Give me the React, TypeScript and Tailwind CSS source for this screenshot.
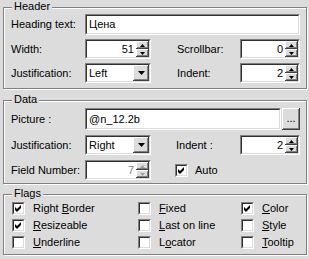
import React from "react";

const BG = "bg-[#dcdcdc]";

function Sunken({ className = "", children }: { className?: string; children?: React.ReactNode }) {
  return (
    <div className={`border border-t-[#808080] border-l-[#808080] border-b-white border-r-white ${className}`}>
      <div className="h-full w-full border border-t-[#303030] border-l-[#303030] border-b-[#dcdcdc] border-r-[#dcdcdc] bg-white flex items-center overflow-hidden">
        {children}
      </div>
    </div>
  );
}

const raised =
  "bg-[#dcdcdc] shadow-[inset_-1px_-1px_#404040,inset_1px_1px_#ffffff,inset_-2px_-2px_#808080,inset_2px_2px_#dcdcdc]";

function Tri({ dir, color = "#000" }: { dir: "up" | "down"; color?: string }) {
  return (
    <svg width="5" height="3" viewBox="0 0 5 3" className="block">
      {dir === "up" ? <polygon points="2.5,0 5,3 0,3" fill={color} /> : <polygon points="0,0 5,0 2.5,3" fill={color} />}
    </svg>
  );
}

function Spin({ value, className = "", disabled = false }: { value: string; className?: string; disabled?: boolean }) {
  return (
    <Sunken className={className}>
      <span className={`flex-1 text-right pr-[2px] ${disabled ? "text-[#808080]" : "text-black"}`}>{value}</span>
      <div className="flex flex-col h-full w-[13px]">
        <div className={`flex-1 flex items-center justify-center ${raised}`}>
          <Tri dir="up" color={disabled ? "#a0a0a0" : "#000"} />
        </div>
        <div className={`flex-1 flex items-center justify-center ${raised}`}>
          <Tri dir="down" color={disabled ? "#a0a0a0" : "#000"} />
        </div>
      </div>
    </Sunken>
  );
}

function Select({ value, className = "" }: { value: string; className?: string }) {
  return (
    <Sunken className={className}>
      <span className="flex-1 pl-[2px] text-black">{value}</span>
      <div className={`h-full w-[16px] flex items-center justify-center ${raised}`}>
        <svg width="7" height="4" viewBox="0 0 7 4" className="block">
          <polygon points="0,0 7,0 3.5,4" fill="#000" />
        </svg>
      </div>
    </Sunken>
  );
}

function Check({ checked }: { checked?: boolean }) {
  return (
    <div className="w-[13px] h-[13px] shrink-0 border border-t-[#808080] border-l-[#808080] border-b-white border-r-white">
      <div className="w-full h-full border border-t-[#303030] border-l-[#303030] border-b-[#dcdcdc] border-r-[#dcdcdc] bg-white flex items-center justify-center">
        {checked && (
          <svg width="7" height="7" viewBox="0 0 7 7" className="block">
            <path d="M0 2 L2 4 L6 0 L6 3 L2 7 L0 5 Z" fill="#000" />
          </svg>
        )}
      </div>
    </div>
  );
}

function Group({ title, className = "", children }: { title: string; className?: string; children: React.ReactNode }) {
  return (
    <div className={`relative border border-[#808080] shadow-[inset_1px_1px_#ffffff,1px_1px_#ffffff] ${className}`}>
      <span className={`absolute -top-[8px] left-[8px] px-[2px] leading-[13px] ${BG}`}>{title}</span>
      {children}
    </div>
  );
}

function Flag({ label, u, checked }: { label: string; u: number; checked?: boolean }) {
  return (
    <div className="flex items-center h-[13px]">
      <Check checked={checked} />
      <span className="ml-[8px] leading-[13px]">
        {label.slice(0, u)}
        <span className="underline underline-offset-[1px]">{label[u]}</span>
        {label.slice(u + 1)}
      </span>
    </div>
  );
}

export default function App() {
  return (
    <div
      className={`w-[309px] h-[259px] ${BG} text-[11px] text-black pl-[3px] pr-[2px] pt-[7px] overflow-hidden`}
      style={{ fontFamily: '"Liberation Sans", Arial, sans-serif' }}
    >
      <Group title="Header" className="h-[82px] pt-[6px] pl-[7px] pr-[5px]">
        <div className="grid grid-cols-[74px_66px_26px_63px_60px] grid-rows-[21px_20px_20px] gap-y-[4px] items-center">
          <span>Heading text:</span>
          <Sunken className="col-span-4 h-[21px]">
            <span className="pl-[2px]">Цена</span>
          </Sunken>
          <span>Width:</span>
          <Spin value="51" className="h-[20px]" />
          <span />
          <span>Scrollbar:</span>
          <Spin value="0" className="h-[20px]" />
          <span>Justification:</span>
          <Select value="Left" className="h-[20px]" />
          <span />
          <span>Indent:</span>
          <Spin value="2" className="h-[20px]" />
        </div>
      </Group>

      <Group title="Data" className="mt-[11px] h-[84px] pt-[7px] pl-[7px] pr-[5px]">
        <div className="grid grid-cols-[74px_66px_25px_64px_60px] grid-rows-[22px_20px_20px] gap-y-[5px] items-center">
          <span>Picture :</span>
          <div className="col-span-4 flex h-[22px]">
            <Sunken className="flex-1 h-full">
              <span className="pl-[2px]">@n_12.2b</span>
            </Sunken>
            <div className={`ml-[1px] w-[18px] h-full flex items-center justify-center ${raised}`}>
              <span className="leading-none -mt-[2px]">...</span>
            </div>
          </div>
          <span>Justification:</span>
          <Select value="Right" className="h-[20px]" />
          <span />
          <span>Indent :</span>
          <Spin value="2" className="h-[20px]" />
          <span>Field Number:</span>
          <Spin value="7" className="h-[20px]" disabled />
          <span />
          <div className="col-span-2 flex items-center -ml-[1px]">
            <Check checked />
            <span className="ml-[7px]">Auto</span>
          </div>
        </div>
      </Group>

      <Group title="Flags" className="mt-[10px] h-[61px] pt-[7px] pl-[8px]">
        <div className="grid grid-cols-[126px_103px_1fr] gap-y-[4px]">
          <Flag label="Right Border" u={6} checked />
          <Flag label="Fixed" u={0} />
          <Flag label="Color" u={0} checked />
          <Flag label="Resizeable" u={0} checked />
          <Flag label="Last on line" u={0} />
          <Flag label="Style" u={0} />
          <Flag label="Underline" u={0} />
          <Flag label="Locator" u={1} />
          <Flag label="Tooltip" u={0} />
        </div>
      </Group>
    </div>
  );
}
